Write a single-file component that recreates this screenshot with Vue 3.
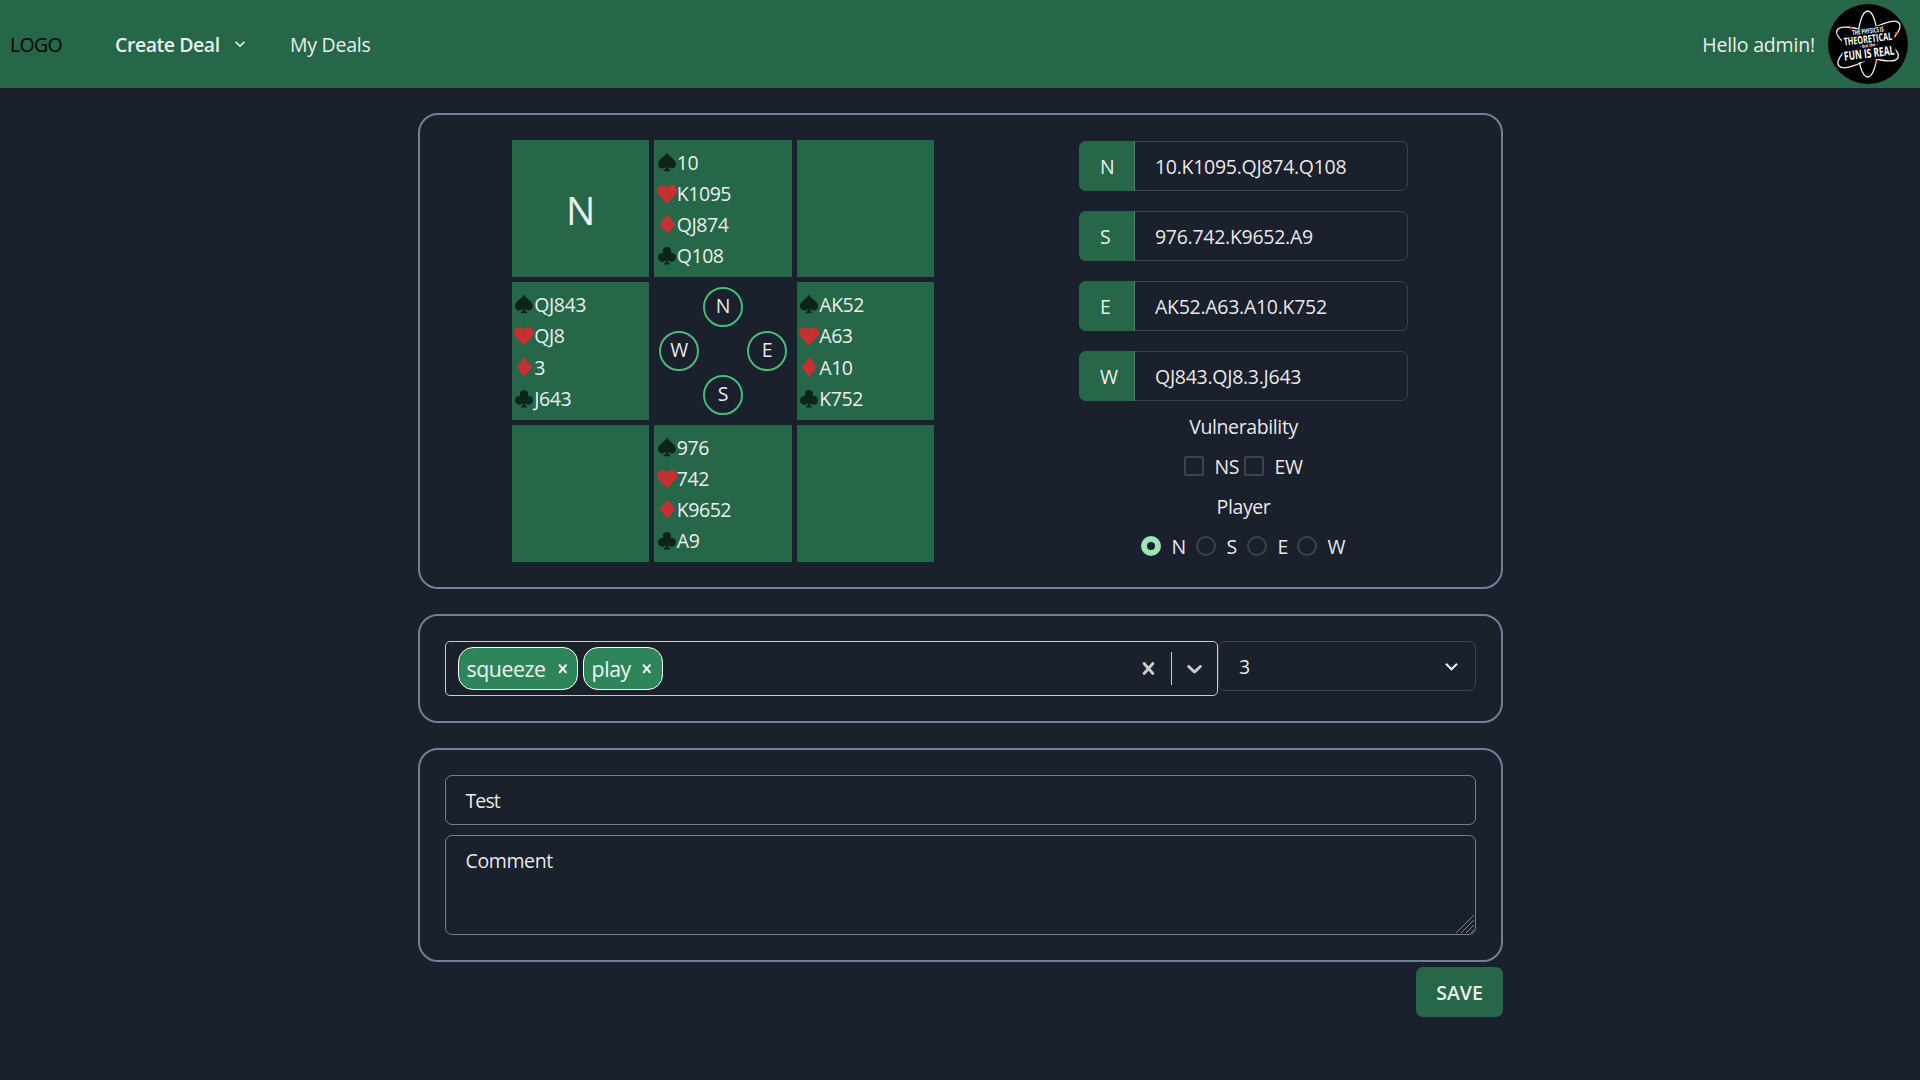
<script setup>
import { ref } from 'vue'

const suits = ['spade', 'heart', 'diamond', 'club']
const paths = {
  spade: 'M10 .6C8.700 4.200 1 7.200 1 12.200c0 2.600 1.900 4.300 4.200 4.300 1.700 0 3-.8 3.900-2 0 1.500-.6 2.700-1.900 3.400-.6.300-.5 1.300.3 1.300h5c.8 0 .9-1 .3-1.300-1.300-.7-1.900-1.900-1.900-3.400.9 1.200 2.200 2 3.900 2 2.300 0 4.200-1.700 4.200-4.300C19 7.200 11.300 4.200 10 .6z',
  heart: 'M18 3.300c-2.200-1.900-5.400-1.600-7.300.5l-.7.8-.8-.8C7.300 1.700 4.100 1.400 1.900 3.300-.6 5.500-.7 9.300 1.500 11.600l7.600 7.800c.5.500 1.300.5 1.800 0l7.600-7.800c2.200-2.300 2.100-6.100-.5-8.300z',
  diamond: 'M9.700 1 3.100 9.400c-.3.400-.3.900 0 1.300l6.600 8.400c.4.500 1 .5 1.400 0l6.600-8.400c.3-.4.300-.9 0-1.300L11.100 1c-.4-.5-1-.5-1.400 0z',
  club: 'M14.600 8.100c-.4 0-.7 0-1 .1.300-.6.500-1.300.5-2.100a4.100 4.100 0 0 0-8.200 0c0 .8.200 1.500.5 2.100-.3-.1-.6-.1-1-.1A4.500 4.500 0 0 0 1 12.500a4.400 4.400 0 0 0 4.500 4.300c1.400 0 2.700-.8 3.600-1.900 0 1.500-.4 2.800-1.800 3.400-.6.300-.5 1.300.2 1.300h5c.7 0 .8-1 .2-1.300-1.400-.6-1.800-1.900-1.800-3.400.9 1.100 2.200 1.900 3.600 1.900a4.400 4.400 0 0 0 4.500-4.300 4.500 4.500 0 0 0-4.400-4.400z'
}
const cells = [
  { big: 'N' },
  { hand: ['10', 'K1095', 'QJ874', 'Q108'] },
  {},
  { hand: ['QJ843', 'QJ8', '3', 'J643'] },
  { compass: true },
  { hand: ['AK52', 'A63', 'A10', 'K752'] },
  {},
  { hand: ['976', '742', 'K9652', 'A9'] },
  {}
]
const compass = ['', 'N', '', 'W', '', 'E', '', 'S', '']
const hands = ref([
  { seat: 'N', value: '10.K1095.QJ874.Q108' },
  { seat: 'S', value: '976.742.K9652.A9' },
  { seat: 'E', value: 'AK52.A63.A10.K752' },
  { seat: 'W', value: 'QJ843.QJ8.3.J643' }
])
const tags = ref(['squeeze', 'play'])
const player = ref('N')
const title = ref('Test')
const crossPath = 'M14.348 14.849c-.469.469-1.229.469-1.697 0l-2.651-3.030-2.651 3.029c-.469.469-1.229.469-1.697 0-.469-.469-.469-1.229 0-1.697l2.758-3.150-2.759-3.152c-.469-.469-.469-1.228 0-1.697s1.228-.469 1.697 0l2.652 3.031 2.651-3.031c.469-.469 1.228-.469 1.697 0s.469 1.229 0 1.697l-2.758 3.152 2.758 3.150c.469.469.469 1.229 0 1.698z'
const downPath = 'M4.516 7.548c.436-.446 1.043-.481 1.576 0l3.908 3.747 3.908-3.747c.533-.481 1.141-.446 1.574 0 .436.445.408 1.197 0 1.615-.406.418-4.695 4.502-4.695 4.502-.217.223-.502.335-.787.335s-.57-.112-.789-.335c0 0-4.287-4.084-4.695-4.502s-.436-1.170 0-1.615z'
const thinDown = 'M16.590 8.590 12 13.170 7.410 8.590 6 10l6 6 6-6z'
</script>

<template>
  <div class="page">
    <header class="bar">
      <span class="logo">LOGO</span>
      <nav>
        <a class="create">Create Deal</a>
        <svg class="nav-chev" viewBox="0 0 24 24"><path :d="thinDown" /></svg>
        <a class="mine">My Deals</a>
      </nav>
      <div class="user">
        <span class="hello">Hello admin!</span>
        <svg class="avatar" viewBox="0 0 80 80">
          <circle cx="40" cy="40" r="40" fill="#000" />
          <g fill="none" stroke="#f4f4f4" stroke-width="1.300">
            <ellipse cx="39.700" cy="40" rx="10" ry="33" />
            <ellipse cx="39.500" cy="40" rx="33.500" ry="11" transform="rotate(24 39.500 40)" />
            <ellipse cx="41" cy="40.500" rx="37" ry="11.500" transform="rotate(-35 41 40.500)" />
          </g>
          <path d="M22 26 57 21 66 28 68 52 15 61 14 36z" fill="#000" />
          <g fill="#e5484d"><circle cx="23" cy="24" r="1.300" /><circle cx="68.500" cy="29" r="1.300" /><circle cx="48" cy="58.500" r="1.300" /></g>
          <g class="motto" transform="rotate(-7 40 40)" text-anchor="middle">
            <text transform="translate(41.500 29.500) scale(0.610 1)" font-size="7">THE PHYSICS IS</text>
            <text transform="translate(40.500 38.700) scale(0.690 1)" font-size="10.500">THEORETICAL</text>
            <text transform="translate(40.500 43) scale(0.800 1)" font-size="4.500">- but the -</text>
            <text transform="translate(40 53.700) scale(0.675 1)" font-size="12.500">FUN IS REAL</text>
          </g>
        </svg>
      </div>
    </header>

    <main>
      <section class="panel deal">
        <div class="board">
          <div v-for="(c, i) in cells" :key="i" class="cell" :class="{ blank: c.compass }">
            <span v-if="c.big" class="big">{{ c.big }}</span>
            <div v-else-if="c.hand" class="hand">
              <div v-for="(s, j) in suits" :key="s" class="suit">
                <svg :class="s" viewBox="0 0 20 20"><path :d="paths[s]" /></svg>
                <span>{{ c.hand[j] }}</span>
              </div>
            </div>
            <div v-else-if="c.compass" class="compass">
              <span v-for="(d, k) in compass" :key="k" :class="{ dir: d }">{{ d }}</span>
            </div>
          </div>
        </div>
        <div class="form">
          <div v-for="h in hands" :key="h.seat" class="field">
            <span class="addon">{{ h.seat }}</span>
            <span class="value">{{ h.value }}</span>
          </div>
          <div class="heading vul">Vulnerability</div>
          <div class="options checks">
            <label class="ns"><i class="box"></i>NS</label>
            <label><i class="box"></i>EW</label>
          </div>
          <div class="heading player">Player</div>
          <div class="options radios">
            <label v-for="p in ['N', 'S', 'E', 'W']" :key="p" :class="'r' + p">
              <i class="dot" :class="{ on: player === p }"></i>{{ p }}
            </label>
          </div>
        </div>
      </section>

      <section class="panel filters">
        <div class="multi">
          <div v-for="t in tags" :key="t" class="tag">
            <span>{{ t }}</span>
            <svg viewBox="0 0 20 20"><path :d="crossPath" /></svg>
          </div>
          <svg class="clear" viewBox="0 0 20 20"><path :d="crossPath" /></svg>
          <i class="sep"></i>
          <svg class="down" viewBox="0 0 20 20"><path :d="downPath" /></svg>
        </div>
        <div class="level">
          <span>3</span>
          <svg viewBox="0 0 24 24"><path :d="thinDown" /></svg>
        </div>
      </section>

      <section class="panel notes">
        <div class="input">{{ title }}</div>
        <div class="area">
          <span>Comment</span>
          <svg class="grip" viewBox="0 0 18 18"><path d="M0 18 18 0M5 18 18 5M10 18 18 10M15 18 18 15" /></svg>
        </div>
      </section>
      <button class="save">SAVE</button>
    </main>
  </div>
</template>

<style>
body {
  margin: 0;
  background: #1a202c;
}
</style>

<style scoped>
.page {
  height: 1080px;
  overflow: hidden;
  background: #1a202c;
  color: rgba(255, 255, 255, 0.92);
  font: 19.500px/30px "Open Sans", "Noto Sans", sans-serif;
  letter-spacing: -0.380px;
}
.page * {
  box-sizing: border-box;
}
svg {
  display: block;
  flex: none;
  fill: currentColor;
}
.bar {
  height: 88px;
  background: #276749;
  display: flex;
  align-items: center;
  padding: 0 12px 0 10px;
}
.bar span,
.bar a {
  white-space: nowrap;
  padding-top: 2px;
}
.logo {
  color: #000;
  width: 105px;
  letter-spacing: -0.700px;
}
nav {
  display: flex;
  align-items: center;
}
.create {
  font-weight: 600;
  width: 115px;
  letter-spacing: -0.450px;
}
.nav-chev {
  width: 20px;
  height: 20px;
}
.mine {
  margin-left: 40px;
  letter-spacing: -0.250px;
}
.user {
  margin-left: auto;
  display: flex;
  align-items: center;
  gap: 13px;
}
.hello {
  letter-spacing: -0.180px;
}
.avatar {
  width: 80px;
  height: 80px;
}
.motto {
  font-family: "Open Sans", sans-serif;
  font-weight: 700;
  fill: #fff;
  letter-spacing: 0;
}
main {
  width: 1085px;
  margin: 25px auto 0;
  position: relative;
  left: 0.500px;
  display: flex;
  flex-direction: column;
}
.panel {
  border: 2px solid #718096;
  border-radius: 20px;
  padding: 25px;
  margin-bottom: 25px;
  display: flex;
}
.deal {
  height: 476px;
  padding-left: 92px;
}
.board {
  display: grid;
  grid-template-columns: repeat(3, 137.500px);
  grid-template-rows: repeat(3, 137.500px);
  gap: 5px;
  margin: -0.250px 0 0 -0.250px;
}
.cell {
  background: #276749;
  display: flex;
  align-items: center;
  justify-content: center;
}
.blank {
  background: none;
}
.big {
  font-size: 39px;
  line-height: 50px;
  padding-top: 2px;
}
.hand {
  flex: 1;
  padding-left: 2.500px;
  letter-spacing: -0.450px;
}
.suit {
  display: flex;
  align-items: center;
  height: 31.250px;
}
.suit span {
  padding-top: 2px;
}
.suit svg {
  width: 20px;
  height: 20px;
}
.spade,
.club {
  color: #0f2419;
}
.heart,
.diamond {
  color: #c53030;
}
.compass {
  display: grid;
  grid-template-columns: repeat(3, 40px);
  grid-template-rows: repeat(3, 40px);
  gap: 4px;
}
.dir {
  border: 2px solid #48bb78;
  border-radius: 50%;
  text-align: center;
  line-height: 33px;
}
.form {
  width: 329px;
  margin: 1px 0 0 144.750px;
}
.field {
  display: flex;
  height: 50px;
  margin-bottom: 20px;
  border: 1px solid #3c414c;
  border-radius: 7px;
  line-height: 50px;
}
.addon {
  width: 56px;
  margin: -1px 0 -1px -1px;
  padding-left: 21px;
  background: #276749;
  border-right: 1px solid #4f8169;
  border-radius: 7px 0 0 7px;
  line-height: 51px;
}
.value {
  padding-left: 20px;
  letter-spacing: -0.280px;
  line-height: 49px;
}
.heading {
  text-align: center;
}
.vul {
  margin-top: -9px;
}
.player {
  margin-top: 10px;
}
.options {
  display: flex;
  margin-top: 10px;
}
.options label {
  display: flex;
  align-items: center;
}
.checks {
  padding-left: 105px;
}
.ns {
  width: 60px;
}
.box,
.dot {
  width: 20px;
  height: 20px;
  border: 2px solid #3f434e;
  margin: -2px 10.500px 0 0;
}
.box {
  border-radius: 2.500px;
}
.dot {
  border-radius: 50%;
}
.dot.on {
  border: 6px solid #9ae6b4;
}
.radios {
  padding-left: 62px;
}
.rN {
  width: 55px;
}
.rS {
  width: 51px;
}
.rE {
  width: 50px;
}
.filters {
  height: 109px;
  align-items: flex-start;
}
.multi {
  width: 773px;
  height: 55px;
  border: 1px solid #ccc;
  border-radius: 5px;
  padding-left: 12px;
  display: flex;
  align-items: center;
  color: #ccc;
}
.tag {
  height: 43px;
  border: 1px solid #fff;
  border-radius: 15px;
  background: #2f855a;
  color: #f0f5f2;
  display: flex;
  align-items: center;
  padding: 0 6px 0 7.500px;
  margin-right: 5px;
  font-size: 21.300px;
  letter-spacing: -0.430px;
}
.tag svg {
  width: 17.500px;
  height: 17.500px;
  margin-left: 8px;
}
.tag:nth-child(2) svg {
  margin-left: 7.500px;
}
.clear {
  width: 25px;
  height: 25px;
  margin-left: auto;
}
.sep {
  width: 1px;
  height: 33px;
  background: #ccc;
  margin: 0 10px;
}
.down {
  width: 25px;
  height: 25px;
  margin-right: 10px;
}
.level {
  flex: 1;
  height: 50px;
  border: 1px solid #3c414c;
  border-radius: 7px;
  display: flex;
  align-items: center;
  justify-content: space-between;
  padding: 0 11px 0 20px;
}
.level span {
  padding-top: 1px;
}
.level svg {
  width: 25px;
  height: 25px;
}
.notes {
  height: 214px;
  margin-bottom: 5px;
  flex-direction: column;
  gap: 10px;
}
.input,
.area {
  border: 1px solid #718096;
  border-radius: 7px;
  padding-left: 19.500px;
}
.input {
  height: 50px;
  line-height: 50px;
  letter-spacing: -0.900px;
}
.area {
  height: 100px;
  padding-top: 10px;
  position: relative;
}
.grip {
  position: absolute;
  right: 1px;
  bottom: 1px;
  width: 18px;
  height: 18px;
  fill: none;
  stroke: #85888d;
  stroke-width: 1;
}
.save {
  align-self: flex-end;
  width: 87px;
  height: 50px;
  padding: 0;
  border: 0;
  border-radius: 7px;
  background: #276749;
  color: rgba(255, 255, 255, 0.92);
  font: 600 19.500px/52px "Open Sans", sans-serif;
  letter-spacing: 0;
}
</style>
